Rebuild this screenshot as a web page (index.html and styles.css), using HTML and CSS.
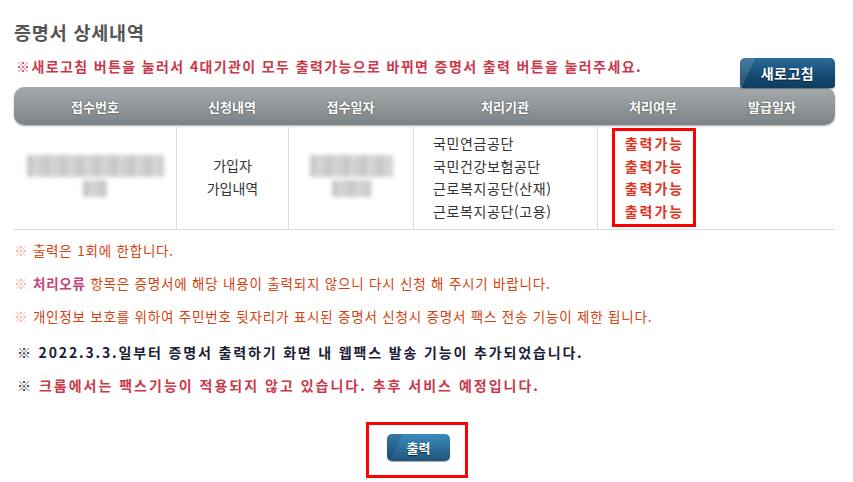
FILE: index.html
```html
<!DOCTYPE html>
<html lang="ko">
<head>
<meta charset="utf-8">
<title>증명서 상세내역</title>
<link rel="stylesheet" href="styles.css">
</head>
<body>
<div class="wrap">
  <h2 class="title">증명서 상세내역</h2>
  <div class="notice-row">
    <p class="notice">※새로고침 버튼을 눌러서 4대기관이 모두 출력가능으로 바뀌면 증명서 출력 버튼을 눌러주세요.</p>
    <button class="btn btn-refresh">새로고침</button>
  </div>
  <div class="grid head">
    <div>접수번호</div>
    <div>신청내역</div>
    <div>접수일자</div>
    <div>처리기관</div>
    <div>처리여부</div>
    <div>발급일자</div>
  </div>
  <div class="grid body-row">
    <div class="cell"><div class="blur-stack"><span class="blur b1"></span><span class="blur b2"></span></div></div>
    <div class="cell center"><span>가입자</span><span>가입내역</span></div>
    <div class="cell"><div class="blur-stack"><span class="blur b3"></span><span class="blur b4"></span></div></div>
    <div class="cell agencies"><span>국민연금공단</span><span>국민건강보험공단</span><span>근로복지공단(산재)</span><span>근로복지공단(고용)</span></div>
    <div class="cell"><div class="status-box"><span>출력가능</span><span>출력가능</span><span>출력가능</span><span>출력가능</span></div></div>
    <div class="cell"></div>
  </div>
  <ul class="notes">
    <li class="n-orange"><i>※</i> 출력은 1회에 한합니다.</li>
    <li class="n-orange"><i>※</i> <b>처리오류</b> 항목은 증명서에 해당 내용이 출력되지 않으니 다시 신청 해 주시기 바랍니다.</li>
    <li class="n-orange"><i>※</i> 개인정보 보호를 위하여 주민번호 뒷자리가 표시된 증명서 신청시 증명서 팩스 전송 기능이 제한 됩니다.</li>
    <li class="n-dark">※ 2022.3.3.일부터 증명서 출력하기 화면 내 웹팩스 발송 기능이 추가되었습니다.</li>
    <li class="n-pink"><i>※</i> 크롬에서는 팩스기능이 적용되지 않고 있습니다. 추후 서비스 예정입니다.</li>
  </ul>
  <div class="print-row">
    <div class="print-box"><button class="btn btn-print">출력</button></div>
  </div>
</div>
</body>
</html>
```
FILE: styles.css
```css
* { box-sizing: border-box; }
html, body { margin: 0; padding: 0; background: #fff; }
body {
  font-family: "Noto Sans CJK KR", "Noto Sans", sans-serif;
  color: #333;
}
.wrap {
  width: 853px;
  padding: 0 18px 0 14px;
}
.title {
  margin: 0;
  padding-top: 20px;
  height: 56px;
  font-size: 18.5px;
  font-weight: 700;
  letter-spacing: 0.8px;
  color: #555;
  line-height: 24px;
}
.notice-row {
  display: flex;
  justify-content: space-between;
  align-items: flex-start;
  height: 35px;
  position: relative;
  z-index: 2;
}
.notice {
  margin: 0;
  padding-left: 2px;
  font-size: 14px;
  font-weight: 700;
  line-height: 20px;
  color: #c9394b;
  letter-spacing: 1.38px;
}
.btn {
  border: 0;
  font-family: inherit;
  color: #fff;
  font-weight: 700;
  cursor: pointer;
  text-shadow: 0 1px 1px rgba(0,0,0,.6);
}
.btn-refresh {
  margin-top: 2px;
  width: 95px;
  height: 30px;
  border-radius: 5px 5px 3px 3px;
  font-size: 14px;
  letter-spacing: 0.5px;
  background:
    linear-gradient(115deg, rgba(255,255,255,.12) 0 14px, rgba(255,255,255,0) 14px),
    linear-gradient(#2a6a9a, #164a72 60%, #0f3c60);
  box-shadow: 0 1px 1px rgba(0,0,0,.3);
  padding-left: 6px;
}
.grid {
  display: grid;
  grid-template-columns: 162px 112px 125px 184px 112px 126px;
}
.head {
  height: 38px;
  margin-top: -4px;
  border-radius: 10px;
  background: linear-gradient(#a4a9ac, #92979a 50%, #7c8285);
  box-shadow: 0 1px 2px rgba(0,0,0,.35);
  color: #fff;
  font-size: 13px;
  font-weight: 700;
  text-shadow: 0 0 2px rgba(0,0,0,.5);
}
.head > div {
  display: flex;
  align-items: center;
  justify-content: center;
}
.body-row {
  height: 105px;
  border-bottom: 1px solid #dcdcdc;
}
.cell {
  border-left: 1px solid #dcdcdc;
  display: flex;
  flex-direction: column;
  justify-content: center;
  align-items: center;
  font-size: 14px;
  line-height: 23px;
  color: #333;
}
.cell:first-child { border-left: 0; }
.cell:nth-child(6) { border-left: 0; }
.center span { display: block; }
.agencies {
  align-items: flex-start;
  padding-left: 19px;
  line-height: 22.5px;
  letter-spacing: 0.6px;
}
.blur-stack {
  display: flex;
  flex-direction: column;
  align-items: center;
  gap: 3px;
  margin-top: -3px;
}
.blur {
  display: block;
  background:
    repeating-linear-gradient(90deg, rgba(0,0,0,.07) 0 6px, rgba(0,0,0,0) 6px 11px, rgba(0,0,0,.03) 11px 17px),
    #d6d6d6;
  filter: blur(2px);
}
.b1 { width: 137px; height: 22px; }
.b2 { width: 24px; height: 17px; }
.b3 { width: 83px; height: 22px; }
.b4 { width: 39px; height: 17px; }
.status-box {
  border: 3px solid #f00;
  width: 84px;
  height: 99px;
  display: flex;
  flex-direction: column;
  align-items: center;
  justify-content: center;
  color: #e2341c;
  font-weight: 700;
  font-size: 14px;
  line-height: 22.5px;
  letter-spacing: 2px;
  padding-left: 2px;
}
.notes {
  list-style: none;
  margin: 0;
  padding: 8px 0 0 0;
}
.notes li {
  height: 33px;
  line-height: 24px;
  font-size: 13.5px;
  letter-spacing: 0.8px;
}
.notes i { font-style: normal; }
.n-orange { color: #d3420f; }
.n-orange i { color: #f5a892; }
.n-orange b { color: #c4427a; font-weight: 700; }
.n-dark {
  color: #1c1c36;
  font-weight: 700;
  font-size: 14px !important;
  letter-spacing: 1.85px !important;
  padding-left: 3px;
  margin-top: 3px;
}
.n-pink {
  color: #c9394b;
  font-weight: 700;
  font-size: 14px !important;
  letter-spacing: 2px !important;
  padding-left: 3px;
}
.n-pink i { color: #333; font-weight: 400; }
.print-row {
  display: flex;
  justify-content: center;
  padding: 16px 15px 0 0;
}
.print-box {
  border: 3px solid #f00;
  width: 102px;
  height: 56px;
  display: flex;
  align-items: center;
  justify-content: center;
}
.btn-print {
  width: 63px;
  height: 27px;
  border-radius: 5px;
  font-size: 13px;
  background:
    linear-gradient(115deg, rgba(0,0,0,.12) 0 14px, rgba(255,255,255,0) 14px),
    linear-gradient(#3a8bbd, #2a6d9a 55%, #1f557a);
  box-shadow: 0 1px 1px rgba(0,0,0,.35);
  margin-top: -6px;
  margin-left: 3px;
}
```
